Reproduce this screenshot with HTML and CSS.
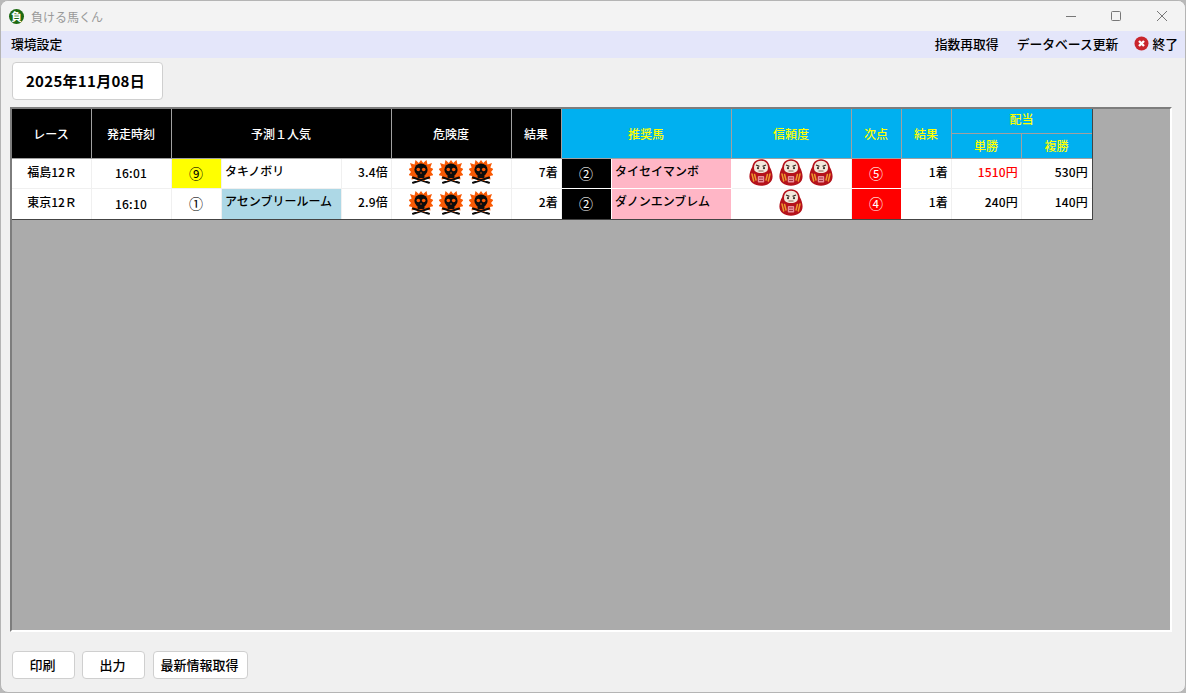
FILE: index.html
```html
<!DOCTYPE html>
<html lang="ja">
<head>
<meta charset="utf-8">
<title>負ける馬くん</title>
<link rel="stylesheet" href="styles.css">
</head>
<body>
<svg class="defs" width="0" height="0">
  <symbol id="bomb" viewBox="0 0 24 24">
    <polygon fill="#f95a05" points="12,0 14.200,3 17.500,0 18.500,4.500 23,3 21.300,7.500 24.500,9 22,12 24.500,15 21,16 21.500,19.500 17,18.500 15,21.500 12,20 9,21.500 7,18.500 2.500,19.500 3,16 -.5,15 2,12 -.5,9 2.700,7.500 1,3 5.500,4.500 6.500,0 9.800,3"/>
    <ellipse cx="12" cy="9.800" rx="6.600" ry="6.300" fill="#0c0c0c"/>
    <rect x="8.500" y="14" width="7" height="4" rx="1" fill="#0c0c0c"/>
    <circle cx="9.300" cy="9.500" r="1.800" fill="#f95a05"/>
    <circle cx="14.700" cy="9.500" r="1.800" fill="#f95a05"/>
    <path d="M11.200 13h1.600" stroke="#f95a05" stroke-width="1.200"/>
    <path d="M4 17.500 L20 22.800 M20 17.500 L4 22.800" stroke="#0c0c0c" stroke-width="2" stroke-linecap="round"/>
  </symbol>
  <symbol id="daruma" viewBox="0 0 24 27">
    <path d="M12 .3C6.500 .3 3.800 4 3.200 8 1.500 11 .4 14.500 .4 17.500c0 6 5 9.200 11.600 9.200s11.600-3.200 11.600-9.200c0-3-1.100-6.500-2.800-9.500C20.200 4 17.500 .3 12 .3z" fill="#b5121b"/>
    <path d="M12 1.800C7.500 1.800 5 5 5 8.800S7.500 14 12 14s7-1.400 7-5.200S16.500 1.800 12 1.800z" fill="#f2e8dc"/>
    <path d="M7 6l3.400 1.400M17 6l-3.400 1.400" stroke="#3a3028" stroke-width="1.200"/>
    <circle cx="9" cy="9.200" r="1.100" fill="#3a3028"/>
    <circle cx="15" cy="9.200" r="1.100" fill="#3a3028"/>
    <path d="M9.500 12h5" stroke="#8a6a55" stroke-width="1"/>
    <rect x="8.800" y="17" width="6.400" height="6.500" rx=".8" fill="#e9909c"/>
    <path d="M10 19h4M10 21.500h4" stroke="#a8323c" stroke-width="1"/>
    <path d="M3 15l1.700 7M5.600 15.500l1.400 5.500M21 15l-1.700 7M18.400 15.500l-1.400 5.500" stroke="#ee9a2e" stroke-width="1.500" stroke-linecap="round"/>
  </symbol>
</svg>
<div class="window">
  <header class="titlebar">
    <span class="logo">負</span>
    <span class="app-title">負ける馬くん</span>
    <div class="controls">
      <svg class="ctl ctl-min" width="12" height="12" viewBox="0 0 12 12"><path d="M1 6.500h10" stroke="#777" fill="none"/></svg>
      <svg class="ctl" width="12" height="12" viewBox="0 0 12 12"><rect x="1.500" y="1.500" width="9" height="9" rx="1" stroke="#777" fill="none"/></svg>
      <svg class="ctl" width="12" height="12" viewBox="0 0 12 12"><path d="M1 1l10 10M11 1L1 11" stroke="#777" fill="none"/></svg>
    </div>
  </header>
  <nav class="menubar">
    <span>環境設定</span>
    <span class="menu-right">
      <span>指数再取得</span>
      <span>データベース更新</span>
      <span class="quit">
        <svg width="15" height="15" viewBox="0 0 15 15"><circle cx="7.500" cy="7.500" r="7" fill="#c9252d"/><path d="M5 5l5 5M10 5l-5 5" stroke="#fff" stroke-width="2.400"/></svg>
        終了
      </span>
    </span>
  </nav>
  <div class="date-row"><button class="date-btn">2025年11月08日</button></div>
  <div class="grid-wrap">
    <table class="grid">
      <colgroup>
        <col class="w80"><col class="w80"><col class="w50"><col class="w120"><col class="w50"><col class="w120"><col class="w50"><col class="w50"><col class="w120"><col class="w120"><col class="w50"><col class="w50"><col class="w70"><col class="w70">
      </colgroup>
      <thead>
        <tr>
          <th rowspan="2">レース</th>
          <th rowspan="2">発走時刻</th>
          <th rowspan="2" colspan="3">予測１人気</th>
          <th rowspan="2">危険度</th>
          <th rowspan="2">結果</th>
          <th rowspan="2" colspan="2" class="blue">推奨馬</th>
          <th rowspan="2" class="blue">信頼度</th>
          <th rowspan="2" class="blue">次点</th>
          <th rowspan="2" class="blue">結果</th>
          <th colspan="2" class="blue sub top">配当</th>
        </tr>
        <tr>
          <th class="blue sub">単勝</th>
          <th class="blue sub">複勝</th>
        </tr>
      </thead>
      <tbody>
        <tr>
          <td class="c up">福島12&#xFF32;</td>
          <td class="c time">16:01</td>
          <td class="c yellow num">⑨</td>
          <td class="name">タキノボリ</td>
          <td class="r">3.4倍</td>
          <td class="c icons"><span class="icon-row"><svg class="bomb"><use href="#bomb"/></svg><svg class="bomb"><use href="#bomb"/></svg><svg class="bomb"><use href="#bomb"/></svg></span></td>
          <td class="r">7着</td>
          <td class="c black num">②</td>
          <td class="name pink">タイセイマンボ</td>
          <td class="c icons"><span class="icon-row"><svg class="daruma"><use href="#daruma"/></svg><svg class="daruma"><use href="#daruma"/></svg><svg class="daruma"><use href="#daruma"/></svg></span></td>
          <td class="c red num">⑤</td>
          <td class="r">1着</td>
          <td class="r loud">1510円</td>
          <td class="r">530円</td>
        </tr>
        <tr>
          <td class="c up">東京12&#xFF32;</td>
          <td class="c time">16:10</td>
          <td class="c num">①</td>
          <td class="name lblue">アセンブリールーム</td>
          <td class="r">2.9倍</td>
          <td class="c icons"><span class="icon-row"><svg class="bomb"><use href="#bomb"/></svg><svg class="bomb"><use href="#bomb"/></svg><svg class="bomb"><use href="#bomb"/></svg></span></td>
          <td class="r">2着</td>
          <td class="c black num">②</td>
          <td class="name pink">ダノンエンブレム</td>
          <td class="c icons"><span class="icon-row"><svg class="daruma"><use href="#daruma"/></svg></span></td>
          <td class="c red num">④</td>
          <td class="r">1着</td>
          <td class="r">240円</td>
          <td class="r">140円</td>
        </tr>
      </tbody>
    </table>
  </div>
  <footer class="actions">
    <button class="act w63">印刷</button>
    <button class="act w63 gap-s">出力</button>
    <button class="act w95">最新情報取得</button>
  </footer>
</div>
</body>
</html>
```
FILE: styles.css
```css
* { box-sizing: border-box; }
html, body { margin: 0; height: 100%; overflow: hidden; }
body {
  background: #b9b9b9;
  font-family: "Noto Sans CJK JP", "Noto Sans", sans-serif;
  color: #000;
}
.defs { position: absolute; }
.window {
  width: 1186px;
  height: 693px;
  display: flex;
  flex-direction: column;
  background: #f0f0f0;
  border: 1px solid #b4b4b4;
  border-radius: 8px;
  overflow: hidden;
}
.titlebar {
  height: 30px;
  flex: none;
  display: flex;
  align-items: center;
  padding-left: 8px;
  background: #f3f3f3;
}
.logo {
  width: 15px;
  height: 15px;
  border-radius: 50%;
  background: #1d6a12;
  color: #fff;
  font-size: 11px;
  font-weight: 700;
  line-height: 15px;
  text-align: center;
}
.app-title { margin-left: 7px; font-size: 12px; color: #999; }
.controls { margin-left: auto; display: flex; align-items: center; gap: 34px; padding-right: 17px; }
.ctl { display: block; }
.ctl-min { margin-right: -1px; }
.menubar {
  height: 27px;
  flex: none;
  display: flex;
  align-items: center;
  justify-content: space-between;
  padding: 0 7px 2px 10px;
  background: #e4e6fa;
  font-size: 12.800px;
  font-weight: 500;
}
.menu-right { display: flex; align-items: center; gap: 18px; }
.quit { display: flex; align-items: center; gap: 3px; margin-left: -2px; }
.date-row { height: 49px; flex: none; padding: 4px 0 0 11px; }
.date-btn {
  width: 151px;
  height: 38px;
  padding: 0 4px 2px 0;
  background: #fff;
  border: 1px solid #cfcfcf;
  border-radius: 4px;
  font: 700 15px "Noto Sans CJK JP", sans-serif;
  letter-spacing: .3px;
}
.grid-wrap {
  width: 1162px;
  height: 525px;
  margin-left: 9px;
  flex: none;
  background: #ababab;
  border-style: solid;
  border-width: 2px;
  border-color: #7d7d7d #fff #fff #7d7d7d;
}
.grid {
  table-layout: fixed;
  width: 1081px;
  border-collapse: separate;
  border-spacing: 0;
  background: #fff;
  font-size: 12px;
  font-weight: 500;
  border-right: 1px solid #444;
  border-bottom: 1px solid #444;
}
.w50 { width: 50px; }
.w70 { width: 70px; }
.w80 { width: 80px; }
.w120 { width: 120px; }
th {
  height: 25px;
  padding: 0 1px 1px 0;
  background: #000;
  color: #fff;
  font-weight: 500;
  border-right: 1px solid #a0a0a0;
  border-bottom: 1px solid #a0a0a0;
}
th.blue { background: #00b0f0; color: #ff0; }
th.sub { height: 25px; }
th.top { padding-bottom: 5px; }
td {
  height: 30px;
  padding: 0;
  border-right: 1px solid #f0f0f0;
  border-bottom: 1px solid #f0f0f0;
  white-space: nowrap;
}
td:last-child, th:last-child { border-right: 0; }
tbody tr:last-child td { border-bottom: 0; height: 30px; }
.c { text-align: center; }
.up { padding: 0 0 5px 1px; }
.time { padding: 0 1px 2px 0; letter-spacing: .2px; }
.num { font-size: 14px; font-weight: 400; padding: 0 1px 2px 0; }
.r { text-align: right; padding: 0 3px 5px 0; letter-spacing: .2px; }
td.r:last-child { padding-right: 4px; }
.name { padding: 0 0 7px 3px; }
.yellow { background: #ff0; }
.black { background: #000; color: #fff; border-color: #fff; }
.red { background: #f00; color: #fff; border-color: #fff; }
.pink { background: #ffb6c6; border-color: #fff; }
.lblue { background: #add8e6; }
.loud { color: #f00; }
.icons { line-height: 0; padding: 0 1px 3px 0; }
.icon-row { display: inline-flex; align-items: center; gap: 6px; height: 24px; vertical-align: middle; }
.bomb { width: 24px; height: 24px; display: block; flex: none; overflow: visible; }
.daruma { width: 24px; height: 27px; display: block; flex: none; }
.actions { display: flex; align-items: flex-start; gap: 7px; padding: 19px 0 0 11px; }
.act {
  height: 28px;
  padding: 0 2px 2px 0;
  background: #fff;
  border: 1px solid #cfcfcf;
  border-radius: 4px;
  font: 500 13px "Noto Sans CJK JP", sans-serif;
}
.w63 { width: 63px; }
.w95 { width: 95px; }
.gap-s { margin-right: 1px; }
```
